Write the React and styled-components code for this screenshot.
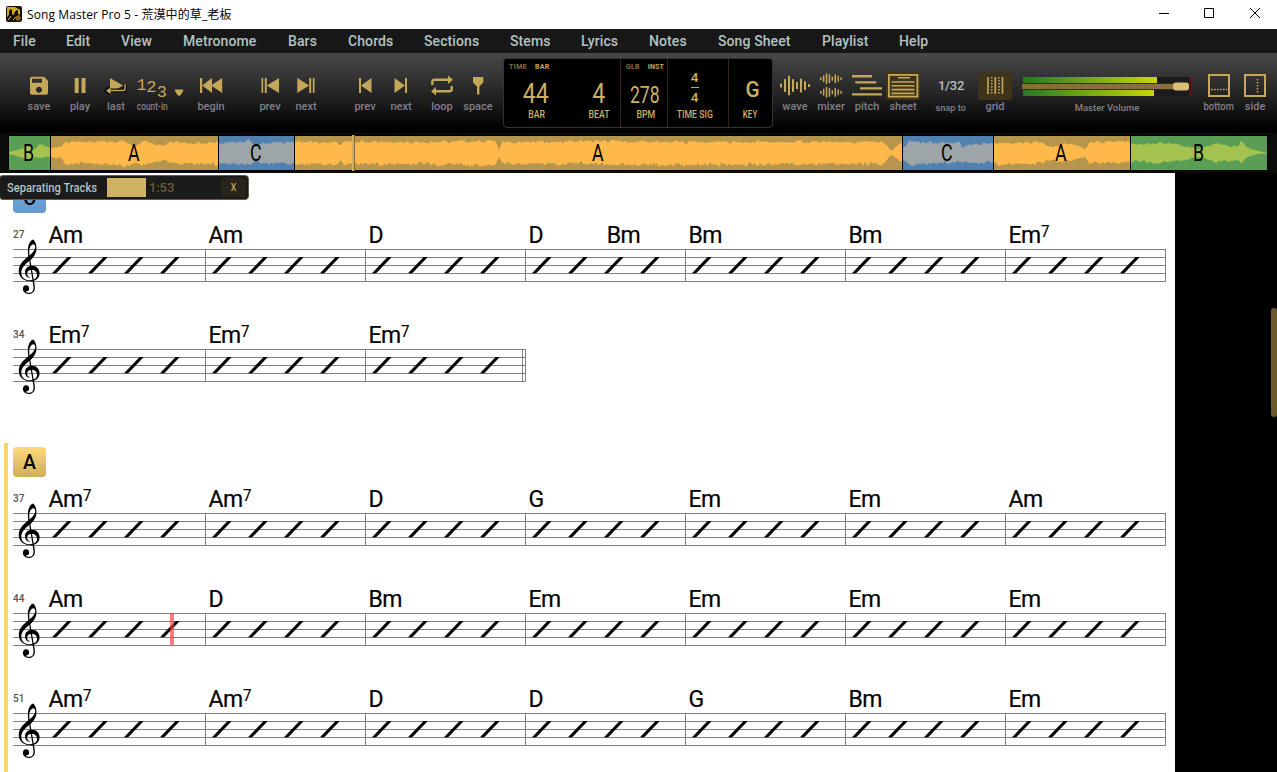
import styled, { createGlobalStyle } from 'styled-components'

const GOLD = '#c5a758'

const GlobalStyle = createGlobalStyle`
    * { box-sizing: border-box; }
    body {
        margin: 0;
        overflow: hidden;
        background: #000;
        font-family: Roboto, 'Noto Sans CJK TC', sans-serif;
    }
`
const Window = styled.div`
    width: 1277px;
    height: 772px;
    display: flex;
    flex-direction: column;
    overflow: hidden;
`

/* title bar */
const TitleBar = styled.div`
    height: 29px;
    flex: none;
    display: flex;
    align-items: center;
    padding-left: 6px;
    background: #fff;
`
const Title = styled.div`
    flex: 1;
    margin-left: 5px;
    padding-bottom: 2px;
    font: 12px 'Open Sans', 'Noto Sans CJK TC', sans-serif;
    letter-spacing: 0.1px;
    color: #000;
`
const AppIcon = styled.svg`
    width: 16px;
    height: 16px;
    margin-bottom: 2px;
`
const WindowButton = styled.svg`
    width: 46px;
    height: 29px;
    fill: none;
    stroke: #000;
`

/* menu */
const MenuBar = styled.div`
    height: 24px;
    flex: none;
    display: flex;
    align-items: center;
    padding-left: 13px;
    background: #171717;
`
const MenuItem = styled.div`
    width: ${({ width }) => width}px;
    font-size: 14px;
    font-weight: 500;
    letter-spacing: 0.1px;
    white-space: nowrap;
    color: #b4c2c0;
`

/* toolbar */
const Toolbar = styled.div`
    height: 80px;
    flex: none;
    display: flex;
    padding: 5px 4px 0 21px;
    background: linear-gradient(#484848, #252525 50%, #000 96%);
`
const Tool = styled.div`
    width: ${({ width }) => width || 36}px;
    margin-left: ${({ gap }) => gap || 0}px;
    padding-top: 13px;
    flex: none;
    display: flex;
    flex-direction: column;
    align-items: center;
`
const ToolIcon = styled.svg`
    width: ${({ width }) => width}px;
    height: 30px;
    fill: ${GOLD};
    stroke: none;
`
const ToolLabel = styled.div`
    height: 12px;
    line-height: ${({ size }) => (size ? 13 : 12)}px;
    font-size: ${({ size }) => size || 11}px;
    font-weight: 500;
    color: #827f8c;
    white-space: nowrap;
    transform: scaleX(${({ squeeze }) => squeeze || 1});
`
const SnapValue = styled.div`
    height: 30px;
    line-height: 30px;
    font-size: 13px;
    font-weight: 500;
    letter-spacing: -0.3px;
    color: #b4c2c0;
`

/* position display */
const Display = styled.div`
    width: 270px;
    height: 70px;
    margin-left: 7px;
    flex: none;
    display: flex;
    background: #000;
    border: 1px solid #333;
    border-radius: 4px;
`
const Cell = styled.div`
    width: ${({ width }) => width}px;
    display: flex;
    flex-direction: column;
    border-right: 1px solid ${({ last }) => (last ? 'transparent' : '#33290f')};
`
const Modes = styled.div`
    height: 16px;
    display: flex;
    align-items: center;
    gap: 8px;
    padding-left: 5px;
`
const Mode = styled.span`
    font-size: 7px;
    font-weight: 700;
    letter-spacing: ${({ spacing }) => spacing || 0.2}px;
    color: ${({ active }) => (active ? GOLD : '#80703f')};
`
const Readings = styled.div`
    height: 50px;
    display: flex;
`
const Reading = styled.div`
    width: ${({ width }) => width}px;
    flex: none;
    display: flex;
    flex-direction: column;
    align-items: center;
    color: #cdb060;
`
const Digits = styled.div`
    height: 34px;
    padding-right: ${({ right }) => right || 0}px;
    padding-left: ${({ left }) => left || 0}px;
    line-height: ${({ line }) => line || 38}px;
    font-size: ${({ size }) => size}px;
    font-weight: ${({ weight }) => weight || 400};
    transform: scaleX(${({ squeeze }) => squeeze});
`
const Fraction = styled.div`
    height: 34px;
    padding-bottom: 10px;
    display: flex;
    flex-direction: column;
    align-items: center;
    justify-content: center;
    gap: 1px;
    font-size: 13.5px;
    font-weight: 500;
    line-height: 17px;
`
const FractionLine = styled.div`
    width: 8px;
    height: 1px;
    flex: none;
    background: ${GOLD};
`
const Unit = styled.div`
    height: 12px;
    line-height: 12px;
    font-size: 10px;
    font-weight: 500;
    white-space: nowrap;
    transform: scaleX(${({ squeeze }) => squeeze || 0.87});
`

/* master volume */
const Meter = styled.svg`
    width: 170px;
    height: 30px;
`

/* song overview */
const Overview = styled.div`
    height: 40px;
    flex: none;
    display: flex;
    gap: 1px;
    padding: 3px 0 3px 9px;
    background: #0b0b0b;
`
const Segment = styled.div`
    width: ${({ width }) => width}px;
    height: 34px;
    display: grid;
    place-items: center;
    background: ${({ color }) => color};
    box-shadow: 0 0 0 1px #000;
    > * { grid-area: 1 / 1; }
`
const SegmentWave = styled.svg`
    width: 100%;
    height: 34px;
`
const SegmentName = styled.div`
    margin-right: 2px;
    font-size: 24px;
    line-height: 34px;
    color: #000;
    transform: scaleX(0.74);
`
const Playhead = styled.div`
    position: absolute;
    left: 352px;
    top: 135px;
    width: 3px;
    height: 36px;
    background: #d0b05c;
    border: solid #7e6834;
    border-width: 0 1px 0 0;
`

/* separation progress */
const Progress = styled.div`
    position: absolute;
    left: -1px;
    top: 175px;
    width: 250px;
    height: 25px;
    display: flex;
    align-items: center;
    padding: 0 2px 0 7px;
    background: #1b1b1b;
    border: 1px solid #6b5a33;
    border-radius: 4px;
    font-size: 12px;
`
const ProgressText = styled.div`
    width: 100px;
    font-weight: 500;
    color: #b4c2c0;
    white-space: nowrap;
    transform: scaleX(0.93);
    transform-origin: left;
`
const ProgressBar = styled.div`
    width: 39px;
    height: 19px;
    background: #cfb362;
`
const ProgressTime = styled.div`
    flex: 1;
    padding-left: 3px;
    font-size: 13px;
    font-weight: 500;
    letter-spacing: -0.1px;
    color: #6b5d38;
`
const CloseProgress = styled.div`
    width: 25px;
    height: 19px;
    line-height: 19px;
    text-align: center;
    font-size: 11px;
    font-weight: 500;
    color: ${GOLD};
    background: #29241c;
    border-radius: 4px;
`
const CloseMark = styled.span`
    display: inline-block;
    transform: scaleX(0.8);
`

/* sheet */
const SheetArea = styled.div`
    flex: 1;
    min-height: 0;
    display: flex;
    justify-content: space-between;
`
const Sheet = styled.div`
    width: 1175px;
    padding: 6px 0 0 4px;
    background: #fff;
    overflow: hidden;
`
const Scrollbar = styled.div`
    width: 6px;
    height: 109px;
    margin-top: 135px;
    background: #6b5a2c;
    border-radius: 3px;
`
const Section = styled.div`
    margin-bottom: 30px;
    padding: 4px 0 0 5px;
    border-left: 4px solid ${({ active }) => (active ? '#ffd36b' : 'transparent')};
`
const SectionTag = styled.div`
    width: 33px;
    height: 30px;
    line-height: 31px;
    text-align: center;
    font-size: 19.5px;
    font-weight: 500;
    color: #000;
    border-radius: 4px;
    background: linear-gradient(${({ from }) => from}, ${({ to }) => to});
`
const System = styled.div`
    height: 100px;
    display: flex;
`
const SystemStart = styled.div`
    width: 32px;
    display: flex;
    flex-direction: column;
`
const BarNumber = styled.div`
    height: 36px;
    padding-top: 15px;
    font-size: 10px;
    line-height: 13px;
    font-weight: 500;
    color: #555;
`
const Bar = styled.div`
    width: 160px;
`
const Chords = styled.div`
    height: 36px;
    display: flex;
    padding: 9px 0 0 3.5px;
`
const Chord = styled.div`
    width: ${({ half }) => (half ? 80 : 150)}px;
    height: 27px;
    font-size: 23px;
    line-height: 28px;
    letter-spacing: -0.5px;
    white-space: nowrap;
    color: #000;
    -webkit-text-stroke: 0.2px #000;
`
const Extension = styled.span`
    display: inline-block;
    height: 16px;
    vertical-align: 6px;
    font-size: 16px;
    line-height: 16px;
    transform: scaleX(0.94);
    transform-origin: left;
`
const Staff = styled.svg`
    display: block;
    height: 60px;
    overflow: visible;
`

const menu = [
    ['File', 53], ['Edit', 55], ['View', 62], ['Metronome', 105], ['Bars', 60],
    ['Chords', 76], ['Sections', 86], ['Stems', 71], ['Lyrics', 68], ['Notes', 69],
    ['Song Sheet', 104], ['Playlist', 77], ['Help', 40],
]

/* level: [position 0..1, top amplitude, bottom amplitude] */
const segments = [
    { name: 'B', width: 41, color: '#5a9e55', wave: '#a4c250', level: [[0, 1, 1], [0.2, 3, 3], [0.35, 5, 5], [0.5, 9, 8], [0.62, 4, 4], [0.75, 8, 5], [0.9, 7, 4], [1, 5, 4]] },
    { name: 'A', width: 167, color: '#b5964c', wave: '#ffb94a', level: [[0, 5, 4], [0.06, 6, 5], [0.08, 11, 11], [0.2, 12, 10], [0.45, 11, 13], [0.5, 6, 10], [0.55, 12, 12], [0.62, 9, 10], [0.67, 8, 7], [0.72, 11, 10], [0.85, 10, 11], [1, 11, 11]] },
    { name: 'C', width: 75, color: '#5081b0', wave: '#9da5a8', level: [[0, 10, 10], [0.4, 12, 12], [0.5, 6, 7], [0.56, 9, 10], [1, 12, 11]] },
    { name: 'A', width: 607, color: '#b5964c', wave: '#ffb94a', level: [[0, 11, 11], [0.07, 11, 12], [0.075, 6, 7], [0.08, 12, 11], [0.2, 11, 11], [0.33, 12, 13], [0.336, 3, 3], [0.342, 11, 11], [0.4, 11, 11], [0.5, 12, 11], [0.56, 11, 12], [0.97, 11, 11], [0.982, 2, 2], [1, 11, 10]] },
    { name: 'C', width: 90, color: '#5081b0', wave: '#9da5a8', level: [[0, 5, 7], [0.08, 12, 12], [0.58, 10, 9], [0.63, 12, 9], [0.66, 6, 9], [0.75, 9, 10], [1, 10, 10]] },
    { name: 'A', width: 136, color: '#b5964c', wave: '#ffb94a', level: [[0, 10, 11], [0.35, 11, 11], [0.42, 6, 7], [0.55, 10, 9], [0.67, 4, 4], [0.7, 11, 10], [1, 11, 10]] },
    { name: 'B', width: 136, color: '#5a9e55', wave: '#a4c250', level: [[0, 9, 9], [0.26, 10, 10], [0.4, 7, 7], [0.5, 4, 4], [0.62, 9, 9], [0.75, 7, 8], [0.79, 7, 7], [0.81, 12, 10], [0.86, 5, 4], [0.93, 2, 1], [1, 0.4, 0.4]] },
]

const sections = [
    {
        name: 'C', from: '#73abdf', to: '#6499cd',
        systems: [
            { number: 27, bars: ['Am', 'Am', 'D', 'D Bm', 'Bm', 'Bm', 'Em7'] },
            { number: 34, bars: ['Em7', 'Em7', 'Em7'], end: true },
        ],
    },
    {
        name: 'A', from: '#ffd97e', to: '#cfaf58', active: true,
        systems: [
            { number: 37, bars: ['Am7', 'Am7', 'D', 'G', 'Em', 'Em', 'Am'] },
            { number: 44, bars: ['Am', 'D', 'Bm', 'Em', 'Em', 'Em', 'Em'], cursor: 0 },
            { number: 51, bars: ['Am7', 'Am7', 'D', 'D', 'G', 'Bm', 'Em'] },
        ],
    },
]

const noise = (n) => {
    const v = Math.sin(n * 12.9898) * 43758.5453
    return v - Math.floor(v)
}

const amplitude = (level, t, side) => {
    const i = Math.max(1, level.findIndex(([p]) => p >= t))
    const a = level[i - 1]
    const b = level[i]
    return a[side] + ((b[side] - a[side]) * (t - a[0])) / (b[0] - a[0])
}

/* mixes slow and fast noise so that peaks come in small groups */
const ripple = (n) => {
    const slow = Math.floor(n / 3)
    return 0.5 * noise(slow) + 0.5 * noise(n + 7)
}

const wavePath = (width, level, seed) => {
    const top = []
    const bottom = []
    for (let x = 0; x <= width; x += 1) {
        const up = amplitude(level, x / width, 1)
        const down = amplitude(level, x / width, 2)
        top.push(`${x} ${(17 - up * (0.8 + 0.38 * ripple(x + seed))).toFixed(1)}`)
        bottom.unshift(`${x} ${(17 + down * (0.74 + 0.46 * ripple(x + seed + 900))).toFixed(1)}`)
    }
    return `M${top.join('L')}L${bottom.join('L')}Z`
}

const Waves = ({ x, y, step, heights, width = 2 }) =>
    heights.map((h, i) => <rect key={i} x={x + i * step} y={y - h / 2} width={width} height={h} rx="0.6" />)

const ToolButton = ({ label, gap, width, size, squeeze, children }) => (
    <Tool gap={gap} width={width}>
        <ToolIcon width={width || 36} viewBox={`0 0 ${width || 36} 30`}>{children}</ToolIcon>
        <ToolLabel size={size} squeeze={squeeze}>{label}</ToolLabel>
    </Tool>
)

const Clef = () => (
    <g transform="translate(5.8 24.5) scale(0.031 -0.031)">
        <path d="M376 415l25 -145c3 -18 3 -18 29 -18c147 0 241 -113 241 -241c0 -113 -67 -198 -168 -238c-14 -6 -15 -5 -13 -17c11 -62 29 -157 29 -214c0 -170 -130 -200 -197 -200c-151 0 -190 98 -190 163c0 62 40 115 107 115c61 0 96 -47 96 -102c0 -58 -36 -85 -67 -94c-23 -7 -32 -10 -32 -17c0 -13 26 -29 80 -29c59 0 158 18 158 166c0 47 -15 134 -27 201c-2 12 -4 11 -15 9c-20 -4 -46 -6 -69 -6c-245 0 -364 165 -364 339c0 202 153 345 297 464c12 10 11 12 9 24c-7 41 -14 106 -14 164c0 104 24 229 98 311c20 22 51 48 65 48c11 0 37 -28 52 -50c41 -60 65 -146 65 -233c0 -153 -82 -280 -190 -381c-6 -6 -8 -7 -6 -19zM470 943c-61 0 -133 -96 -133 -252c0 -32 2 -66 6 -92c2 -13 6 -14 13 -8c79 69 174 159 174 270c0 55 -27 82 -60 82zM361 262l-21 128c-2 11 -4 12 -14 4c-47 -38 -93 -75 -153 -142c-83 -94 -93 -173 -93 -232c0 -139 113 -236 288 -236c20 0 40 2 56 5c15 3 16 3 14 14l-50 298c-2 11 -4 12 -20 8c-61 -17 -100 -60 -100 -117c0 -46 30 -89 72 -107c7 -3 15 -6 15 -13c0 -6 -4 -11 -12 -11c-7 0 -19 3 -27 6c-68 23 -115 87 -115 177c0 85 57 164 145 194c18 6 18 5 15 24zM430 103l49 -285c2 -12 4 -12 16 -6c56 28 94 79 94 142c0 88 -67 156 -148 163c-12 1 -13 -2 -11 -14z" />
    </g>
)

const StaffLines = ({ width }) =>
    [0, 8, 16, 24, 32].map((y) => <rect key={y} y={y} width={width} height="1" fill="#808080" />)

const ChordName = ({ name, half }) => (
    <Chord half={half}>
        {name.replace('7', '')}
        {name.endsWith('7') && <Extension>7</Extension>}
    </Chord>
)

const BarView = ({ chords, cursor, end }) => {
    const names = chords.split(' ')
    return (
        <Bar>
            <Chords>
                {names.map((name) => <ChordName key={name} name={name} half={names.length > 1} />)}
            </Chords>
            <Staff width="161" viewBox="0 0 161 60">
                <StaffLines width={161} />
                <rect x="160" width="1" height="33" fill="#808080" />
                {end && <rect x="157" width="1" height="33" fill="#808080" />}
                {[7, 43, 79, 115].map((x) => (
                    <path key={x} d={`M${x} 24.3L${x + 15.6} 8H${x + 19.8}L${x + 4.2} 24.3Z`} />
                ))}
                {cursor && <rect x="125" y="0" width="4" height="32" fill="#ff3b3b" opacity="0.65" />}
            </Staff>
        </Bar>
    )
}

const App = () => (
    <Window>
        <GlobalStyle />
        <TitleBar>
            <AppIcon viewBox="0 0 16 16">
                <rect width="16" height="16" rx="2" fill="#17130a" />
                <path d="M1 1h8l5 3v5l-4-2-3 2-3-1-3 3z" fill="#d6a625" />
                <path d="M4 3l2 1v4l2 5H6l-1-3-2 4H1l2-5V6zM10 3l2 2v4l-2 1-2-3z" fill="#080704" />
                <path d="M10 10l3-1 2 3-2 3-3-1z" fill="#8d6c1c" />
                <path d="M8 6l3-3M2 14l3-4M7 14l3-3" stroke="#efca56" />
            </AppIcon>
            <Title>Song Master Pro 5 - 荒漠中的草_老板</Title>
            <WindowButton viewBox="0 0 46 29"><path d="M20 13.5h10" /></WindowButton>
            <WindowButton viewBox="0 0 46 29"><path d="M19.5 8.5h9v9h-9z" /></WindowButton>
            <WindowButton viewBox="0 0 46 29"><path d="M19 8l10 10M29 8L19 18" /></WindowButton>
        </TitleBar>

        <MenuBar>
            {menu.map(([name, width]) => <MenuItem key={name} width={width}>{name}</MenuItem>)}
        </MenuBar>

        <Toolbar>
            <ToolButton label="save">
                <path transform="translate(6 2.7)" d="M17 3H5c-1.11 0-2 .9-2 2v14c0 1.1.89 2 2 2h14c1.1 0 2-.9 2-2V7l-4-4zm-5 16c-1.66 0-3-1.34-3-3s1.34-3 3-3 3 1.34 3 3-1.34 3-3 3zm3-10H5V5h10v4z" />
            </ToolButton>
            <ToolButton label="play" gap={5}>
                <path d="M12.7 7h4v15h-4zM19.5 7h4v15h-4z" />
            </ToolButton>
            <ToolButton label="last">
                <path d="M12 7L25 14.5L12 22Z" />
                <path d="M27 13v4.5q0 2-2 2H9M12 16.5L8.5 19.7L12 23" fill="none" stroke="#0c0c0c" strokeWidth="4" />
                <path d="M27 13v4.5q0 2-2 2H9" fill="none" stroke={GOLD} strokeWidth="1.4" />
                <path d="M8 19.7L12.5 16.5V23Z" />
            </ToolButton>
            <ToolButton label="count-in" squeeze={0.76}>
                <g fontFamily="Liberation Mono, monospace" fontSize="17">
                    <text x="2.5" y="18.5">1</text>
                    <text x="12.3" y="21.2">2</text>
                    <text x="22.8" y="26.2">3</text>
                </g>
            </ToolButton>
            <ToolButton width={18}>
                <path d="M5 18.5h8.2v1.5l-2.8 4.5h-2.6l-2.8-4.5z" />
            </ToolButton>
            <ToolButton label="begin" gap={5}>
                <path d="M7 7h2.2v15H7zM19 7v15L9.2 14.5ZM29.2 7v15L18 14.5Z" />
            </ToolButton>
            <ToolButton label="prev" gap={23}>
                <path d="M9.5 7h1.7v15H9.5zM12.8 7h2v15h-2zM27 7v15L14.8 14.5Z" />
            </ToolButton>
            <ToolButton label="next">
                <path d="M26.5 7h-1.7v15h1.7zM23.2 7h-2v15h2zM9.3 7v15L21.2 14.5Z" />
            </ToolButton>
            <ToolButton label="prev" gap={23}>
                <path d="M12 7h2v15h-2zM24.5 7v15L14 14.5Z" />
            </ToolButton>
            <ToolButton label="next">
                <path d="M24 7h-2v15h2zM11.5 7v15L22 14.5Z" />
            </ToolButton>
            <ToolButton label="loop" gap={5}>
                <path d="M8.3 14v-3q0-2.3 2.3-2.3H25M27.7 15v3q0 2.3-2.3 2.3H11" fill="none" stroke={GOLD} strokeWidth="2.4" />
                <path d="M24 4.5L29 8.7L24 13ZM12 16L7 20.3L12 24.5Z" />
            </ToolButton>
            <ToolButton label="space">
                <path d="M13 6h10.3v5.5l-3.9 4v8h-2.4v-8l-4-4z" />
            </ToolButton>

            <Display>
                <Cell width={117}>
                    <Modes>
                        <Mode spacing={0.4}>TIME</Mode>
                        <Mode active>BAR</Mode>
                    </Modes>
                    <Readings>
                        <Reading width={66}>
                            <Digits size={27.5} squeeze={0.84} right={4}>44</Digits>
                            <Unit>BAR</Unit>
                        </Reading>
                        <Reading width={58}>
                            <Digits size={27.5} squeeze={0.84}>4</Digits>
                            <Unit>BEAT</Unit>
                        </Reading>
                    </Readings>
                </Cell>
                <Cell width={47}>
                    <Modes>
                        <Mode>GLB</Mode>
                        <Mode active>INST</Mode>
                    </Modes>
                    <Readings>
                        <Reading width={49}>
                            <Digits size={24.5} line={39} squeeze={0.72} right={1}>278</Digits>
                            <Unit>BPM</Unit>
                        </Reading>
                    </Readings>
                </Cell>
                <Cell width={61}>
                    <Modes />
                    <Readings>
                        <Reading width={53}>
                            <Fraction>
                                <div>4</div>
                                <FractionLine />
                                <div>4</div>
                            </Fraction>
                            <Unit>TIME SIG</Unit>
                        </Reading>
                    </Readings>
                </Cell>
                <Cell width={43} last>
                    <Modes />
                    <Readings>
                        <Reading width={43}>
                            <Digits size={22.5} weight={500} line={29} squeeze={0.92} left={4}>G</Digits>
                            <Unit squeeze={0.8}>KEY</Unit>
                        </Reading>
                    </Readings>
                </Cell>
            </Display>

            <ToolButton label="wave" gap={4}>
                <Waves x={3} y={14.5} step={4} heights={[4, 13, 19.5, 13, 7, 14, 9, 3]} />
            </ToolButton>
            <ToolButton label="mixer">
                <Waves x={7} y={7.7} step={2.9} width={1.5} heights={[3, 7, 11, 9, 4, 9, 6, 3]} />
                <Waves x={7} y={21.3} step={2.9} width={1.5} heights={[3, 7, 11, 9, 4, 9, 6, 3]} />
            </ToolButton>
            <ToolButton label="pitch">
                <path d="M3 4h20v2.4H3zM6.3 10.2h21v2.4h-21zM11 16.2h22v2.4H11zM3 22.2h30v2.4H3z" />
            </ToolButton>
            <ToolButton label="sheet">
                <rect x="1" y="1" width="34" height="28" rx="3" fill="#3f341b" />
                <rect x="3.9" y="3.9" width="28.5" height="21.7" fill="none" stroke={GOLD} strokeWidth="1.8" />
                <path d="M13 6h12v1.6H13zM6.5 10.2h23v1.6h-23zM6.5 14h23v1.6h-23zM6.5 17.8h23v1.6h-23zM6.5 21.6h23v1.6h-23z" />
            </ToolButton>
            <Tool gap={12}>
                <SnapValue>1/32</SnapValue>
                <ToolLabel size={9.5} squeeze={0.97}>snap to</ToolLabel>
            </Tool>
            <ToolButton label="grid" gap={8}>
                <rect x="1" y="1" width="34" height="28" rx="3" fill="#3f341b" />
                <path d="M11 6v17M18.3 6v17M25.5 6v17" stroke={GOLD} strokeWidth="1.6" />
                <path d="M14.7 6v17M22 6v17" stroke={GOLD} strokeWidth="1.6" strokeDasharray="1.5 1.5" />
            </ToolButton>
            <Tool width={170} gap={9}>
                <Meter viewBox="0 0 170 30">
                    <defs>
                        <linearGradient id="level">
                            <stop offset="0" stopColor="#237a22" />
                            <stop offset="1" stopColor="#c8d60c" />
                        </linearGradient>
                    </defs>
                    <rect x="1" y="6" width="168" height="19" fill="#1b1b1b" />
                    <rect x="167" y="6" width="2" height="19" fill="#561010" />
                    <rect x="1" y="6" width="134" height="6" fill="url(#level)" />
                    <rect x="1" y="19" width="131" height="6" fill="url(#level)" />
                    <rect x="0" y="12" width="167" height="7" fill="#352b16" />
                    <rect x="0" y="13" width="155" height="5" fill="#877039" />
                    <rect x="151" y="11.5" width="16" height="8" rx="3" fill="#d8bf77" />
                </Meter>
                <ToolLabel size={9.5}>Master Volume</ToolLabel>
            </Tool>
            <ToolButton label="bottom" gap={9} squeeze={0.86}>
                <path d="M8 4h20v21H8z" fill="none" stroke={GOLD} strokeWidth="2" />
                <path d="M10 18.5h16" stroke={GOLD} strokeWidth="1.6" strokeDasharray="1.6 1.4" />
            </ToolButton>
            <ToolButton label="side">
                <path d="M8 4h20v21H8z" fill="none" stroke={GOLD} strokeWidth="2" />
                <path d="M20.5 8v15" stroke={GOLD} strokeWidth="1.6" strokeDasharray="1.6 1.4" />
            </ToolButton>
        </Toolbar>

        <Overview>
            {segments.map(({ name, width, color, wave, level }, i) => (
                <Segment key={i} width={width} color={color}>
                    <SegmentWave viewBox={`0 0 ${width} 34`} preserveAspectRatio="none">
                        <path d={wavePath(width, level, i * 40)} fill={wave} />
                    </SegmentWave>
                    <SegmentName>{name}</SegmentName>
                </Segment>
            ))}
        </Overview>
        <Playhead />

        <SheetArea>
            <Sheet>
                {sections.map((section) => (
                    <Section key={section.name} active={section.active}>
                        <SectionTag from={section.from} to={section.to}>{section.name}</SectionTag>
                        {section.systems.map(({ number, bars, cursor, end }) => (
                            <System key={number}>
                                <SystemStart>
                                    <BarNumber>{number}</BarNumber>
                                    <Staff width="32" viewBox="0 0 32 60">
                                        <StaffLines width={32} />
                                        <Clef />
                                    </Staff>
                                </SystemStart>
                                {bars.map((chords, i) => (
                                    <BarView key={i} chords={chords} cursor={cursor === i} end={end && i === bars.length - 1} />
                                ))}
                            </System>
                        ))}
                    </Section>
                ))}
            </Sheet>
            <Scrollbar />
        </SheetArea>

        <Progress>
            <ProgressText>Separating Tracks</ProgressText>
            <ProgressBar />
            <ProgressTime>1:53</ProgressTime>
            <CloseProgress><CloseMark>X</CloseMark></CloseProgress>
        </Progress>
    </Window>
)

export default App
